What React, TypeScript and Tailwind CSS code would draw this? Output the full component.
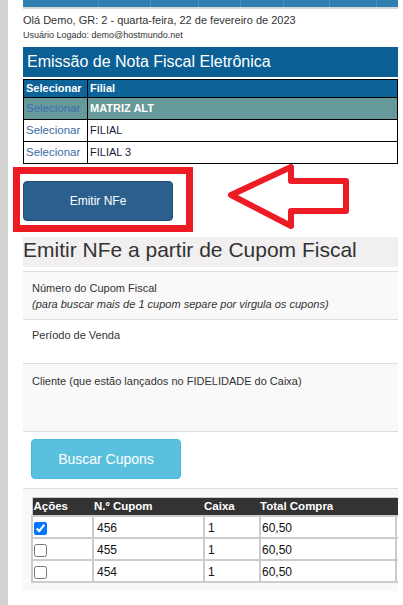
import React from "react";

const font = { fontFamily: '"Liberation Sans", Arial, sans-serif' };

export default function App() {
  const rows = [
    { n: "456", c: "1", t: "60,50", checked: true },
    { n: "455", c: "1", t: "60,50", checked: false },
    { n: "454", c: "1", t: "60,50", checked: false },
  ];
  return (
    <div className="relative flex w-[403px] h-[605px] overflow-hidden bg-white text-[#333]" style={font}>
      <div className="w-[8px] shrink-0 bg-[#d2d2d2]" />
      <div className="w-[15px] shrink-0" />
      <div className="w-[375px] shrink-0 overflow-hidden flex flex-col">
        {/* top bar */}
        <div className="h-[7px] bg-[#2f80b0] flex">
          <div className="w-[76px] border-r border-[#4a92bd]" />
          <div className="w-[52px] border-r border-[#4a92bd]" />
          <div className="w-[48px] border-r border-[#4a92bd]" />
          <div className="w-[42px] border-r border-[#4a92bd]" />
          <div className="w-[43px] border-r border-[#4a92bd]" />
          <div className="w-[46px] border-r border-[#4a92bd]" />
          <div className="w-[47px] border-r border-[#4a92bd]" />
        </div>
        <div className="h-[2px] bg-[#d8d8d8]" />
        <div className="pt-[4px] text-[11px] leading-[14px] text-[#333] whitespace-nowrap">
          Olá Demo, GR: 2 - quarta-feira, 22 de fevereiro de 2023
        </div>
        <div className="mt-[2px] text-[9px] leading-[12px] text-[#333] whitespace-nowrap">
          Usuário Logado: demo@hostmundo.net
        </div>
        {/* header */}
        <div className="mt-[6px] h-[30px] bg-[#0a5f95] px-[4px] text-[16px] leading-[30px] text-white whitespace-nowrap">
          Emissão de Nota Fiscal Eletrônica
        </div>
        <table className="mt-[2px] w-full border-collapse border border-black text-[11px]">
          <thead>
            <tr className="h-[18px] bg-[#0e6399] text-white">
              <th className="w-[64px] border border-black pl-[2px] text-left font-bold">Selecionar</th>
              <th className="border border-black pl-[2px] text-left font-bold">Filial</th>
            </tr>
          </thead>
          <tbody>
            <tr className="h-[22px] bg-[#669999]">
              <td className="border border-black pl-[2px] text-[11.5px] text-[#3f6fb2]">Selecionar</td>
              <td className="border border-black pl-[2px] font-bold text-white">MATRIZ ALT</td>
            </tr>
            <tr className="h-[22px] bg-white">
              <td className="border border-black pl-[2px] text-[11.5px] text-[#3a6ca4]">Selecionar</td>
              <td className="border border-black pl-[2px] text-[#1c1c3c]">FILIAL</td>
            </tr>
            <tr className="h-[22px] bg-white">
              <td className="border border-black pl-[2px] text-[11.5px] text-[#3a6ca4]">Selecionar</td>
              <td className="border border-black pl-[2px] text-[#1c1c3c]">FILIAL 3</td>
            </tr>
          </tbody>
        </table>
        {/* Emitir button */}
        <div className="mt-[17px] flex">
          <button className="h-[40px] w-[150px] rounded-[4px] border border-[#204d74] bg-[#2b5f8e] text-[12px] text-white">
            Emitir NFe
          </button>
        </div>
        {/* title */}
        <div className="mt-[16px] h-[30px] bg-[#f1efef] text-[21px] leading-[26px] text-[#333] whitespace-nowrap">
          Emitir NFe a partir de Cupom Fiscal
        </div>
        {/* form */}
        <div className="mt-[4px] border-t border-[#dddddd] bg-[#f9f9f9]">
          <div className="h-[47px] pl-[9px] pt-[8px] text-[11px] leading-[16px] text-[#333]">
            <div>Número do Cupom Fiscal</div>
            <div className="italic">(para buscar mais de 1 cupom separe por virgula os cupons)</div>
          </div>
          <div className="h-[44px] border-t border-[#dddddd] bg-white pl-[9px] pt-[7px] text-[11px] leading-[16px]">
            Período de Venda
          </div>
          <div className="h-[68px] border-t border-[#dddddd] pl-[9px] pt-[9px] text-[11px] leading-[16px]">
            Cliente (que estão lançados no FIDELIDADE do Caixa)
          </div>
        </div>
        <div className="h-[57px] border-t border-[#dddddd] bg-white pl-[8px] pt-[7px]">
          <button className="h-[40px] w-[150px] rounded-[4px] border border-[#46b8da] bg-[#5bc0de] text-[14px] text-white">
            Buscar Cupons
          </button>
        </div>
        <div className="border-t border-[#dddddd] bg-[#f9f9f9] pl-[8px] pt-[8px] pb-[8px]">
          <table className="w-[420px] border-collapse border border-[#cccccc] text-[12px] text-[#111]">
            <thead>
              <tr className="h-[17px] bg-[#333333] text-left text-[11.5px] font-bold text-white">
                <th className="w-[61px] pl-[1px] text-left">Ações</th>
                <th className="w-[111px] pl-[1px] text-left">N.º Cupom</th>
                <th className="w-[56px] pl-[0px] text-left">Caixa</th>
                <th className="w-[136px] pl-[0px] text-left">Total Compra</th>
                <th className="pl-[1px] text-left"></th>
              </tr>
            </thead>
            <tbody>
              {rows.map((r) => (
                <tr key={r.n} className="h-[22px] bg-white">
                  <td className="border-2 border-[#cccccc] pl-[1px] pt-[5px] align-top">
                    <input type="checkbox" defaultChecked={r.checked} className="m-0 block h-[13px] w-[13px]" />
                  </td>
                  <td className="border-2 border-[#cccccc] pl-[3px] pt-[2px] align-top">{r.n}</td>
                  <td className="border-2 border-[#cccccc] pl-[3px] pt-[2px] align-top">{r.c}</td>
                  <td className="border-2 border-[#cccccc] pl-[1px] pt-[2px] align-top">{r.t}</td>
                  <td className="border-2 border-[#cccccc] pl-[1px] pt-[2px] align-top"></td>
                </tr>
              ))}
            </tbody>
          </table>
        </div>
      </div>
      {/* red annotation box */}
      <div className="pointer-events-none absolute left-[13px] top-[167px] h-[65px] w-[180px] border-[7px] border-[#ed1c24]" />
      {/* red arrow */}
      <svg className="pointer-events-none absolute left-[220px] top-[158px]" width="140" height="80" viewBox="0 0 140 80">
        <polygon
          points="11,37 71,9 71,23 126,23 126,53 71,53 71,68"
          fill="none"
          stroke="#ed1c24"
          strokeWidth="6"
          strokeLinejoin="round"
        />
      </svg>
    </div>
  );
}
